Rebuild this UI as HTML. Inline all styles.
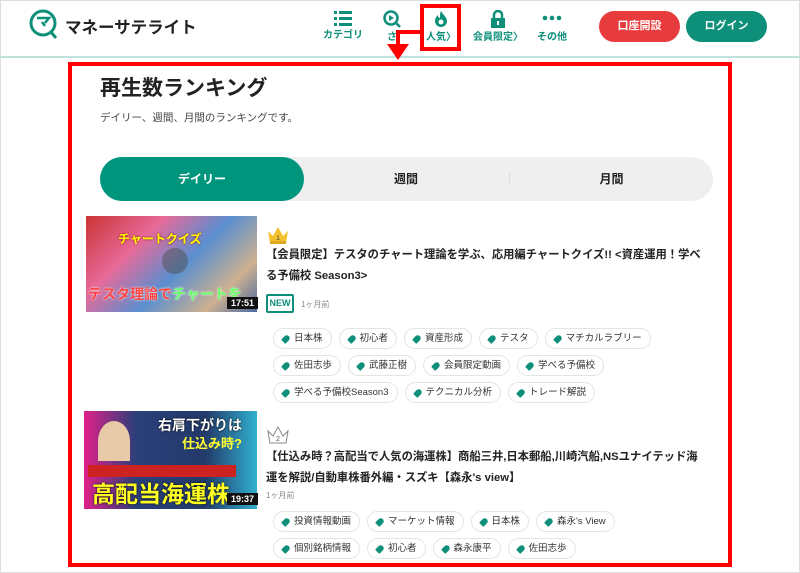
<!DOCTYPE html>
<html><head><meta charset="utf-8"><style>
*{margin:0;padding:0;box-sizing:border-box}
body{width:800px;height:573px;overflow:hidden;background:#fff;font-family:"Liberation Sans","Noto Sans CJK JP",sans-serif;color:#222;position:relative}
.abs{position:absolute}
.nav{position:absolute;top:10px;width:60px;text-align:center;color:#0d8f7a;font-size:10px;font-weight:bold;line-height:12px}
.nav svg{display:block;margin:0 auto 4px}
.btn{position:absolute;top:11px;height:31px;width:81px;border-radius:16px;color:#fff;font-size:11px;font-weight:bold;text-align:center;line-height:31px}
.tags{position:absolute;left:273px;width:450px;display:flex;flex-wrap:wrap;column-gap:7px}
.br{flex-basis:100%;height:0}
.tag{height:21px;margin-bottom:6px;border:1px solid #e4e4e4;border-radius:11px;padding:0 8px 0 8px;font-size:9.5px;line-height:19px;color:#333;display:flex;align-items:center;white-space:nowrap}
.tag i{display:inline-block;width:8px;height:6px;background:#0d8f7a;border-radius:1px 3px 3px 1px;transform:rotate(-45deg);margin-right:4px}
.title{position:absolute;left:266px;width:460px;font-size:11.3px;font-weight:bold;line-height:21px;color:#222;white-space:nowrap}
.time{position:absolute;background:#111;color:#fff;font-size:9px;font-weight:bold;padding:1px 4px}
</style></head><body>
<div class="abs" style="left:0;top:0;width:800px;height:573px;border:1px solid #ddd"></div>
<svg class="abs" style="left:29px;top:9px" width="30" height="34" viewBox="0 0 30 34"><circle cx="14" cy="14" r="12" fill="none" stroke="#0d8f7a" stroke-width="3"/><path d="M8 9h12l-4 5M13 13l3 4" fill="none" stroke="#0d8f7a" stroke-width="2.5"/><path d="M22 23l5 6" stroke="#0d8f7a" stroke-width="3"/></svg>
<div class="abs" style="left:65px;top:14px;font-size:16.5px;font-weight:bold;color:#222">マネーサテライト</div>
<div class="nav" style="left:313px"><svg width="18" height="16"><rect x="0" y="1" width="3" height="3" fill="#0d8f7a"/><rect x="5" y="1" width="13" height="3" fill="#0d8f7a"/><rect x="0" y="7" width="3" height="3" fill="#0d8f7a"/><rect x="5" y="7" width="13" height="3" fill="#0d8f7a"/><rect x="0" y="13" width="3" height="3" fill="#0d8f7a"/><rect x="5" y="13" width="13" height="3" fill="#0d8f7a"/></svg>カテゴリ</div>
<div class="nav" style="left:362px"><svg width="18" height="18"><circle cx="8" cy="8" r="6.5" fill="none" stroke="#0d8f7a" stroke-width="2.5"/><path d="M6 5l5 3-5 3z" fill="#0d8f7a"/><path d="M13 13l4 4" stroke="#0d8f7a" stroke-width="2.5"/></svg>さ</div>
<div class="nav" style="left:411px"><svg width="16" height="18"><path d="M8 1C10 5 14 7 14 11a6 6 0 0 1-12 0C2 8 4 6 5 5c0 2 1 3 2 3C7 5 7 3 8 1z" fill="#0d8f7a"/><circle cx="8" cy="12" r="2.5" fill="#fff"/></svg>人気〉</div>
<div class="nav" style="left:468px"><svg width="16" height="18"><path d="M4 8V5a4 4 0 0 1 8 0v3" fill="none" stroke="#0d8f7a" stroke-width="2.5"/><rect x="1" y="8" width="14" height="10" fill="#0d8f7a"/><rect x="7" y="11" width="2" height="4" fill="#fff"/></svg>会員限定〉</div>
<div class="nav" style="left:522px"><svg width="20" height="18"><circle cx="3" cy="8" r="2.3" fill="#0d8f7a"/><circle cx="10" cy="8" r="2.3" fill="#0d8f7a"/><circle cx="17" cy="8" r="2.3" fill="#0d8f7a"/></svg>その他</div>
<div class="btn" style="left:599px;background:#e83b3d">口座開設</div>
<div class="btn" style="left:686px;background:#0d8f7a">ログイン</div>
<div class="abs" style="left:0;top:56px;width:800px;height:2px;background:#bfe3dc"></div>
<div class="abs" style="left:420px;top:4px;width:41px;height:47px;border:4px solid #f00"></div>
<div class="abs" style="left:396px;top:30px;width:26px;height:4px;background:#f00"></div>
<div class="abs" style="left:396px;top:30px;width:4px;height:18px;background:#f00"></div>
<svg class="abs" style="left:387px;top:44px" width="22" height="16"><path d="M0 0h22L11 16z" fill="#f00"/></svg>
<div class="abs" style="left:68px;top:62px;width:664px;height:505px;border:4px solid #f00"></div>
<div class="abs" style="left:100px;top:72px;font-size:21px;font-weight:bold;color:#222">再生数ランキング</div>
<div class="abs" style="left:100px;top:110px;font-size:10.5px;color:#444">デイリー、週間、月間のランキングです。</div>
<div class="abs" style="left:100px;top:157px;width:613px;height:44px;border-radius:22px;background:#efefef"></div>
<div class="abs" style="left:100px;top:157px;width:204px;height:44px;border-radius:22px;background:#00967d;color:#fff;font-size:12px;font-weight:bold;text-align:center;line-height:44px">デイリー</div>
<div class="abs" style="left:304px;top:157px;width:204px;height:44px;font-size:12px;font-weight:bold;text-align:center;line-height:44px">週間</div>
<div class="abs" style="left:509px;top:172px;width:1px;height:14px;background:#ddd"></div>
<div class="abs" style="left:510px;top:157px;width:203px;height:44px;font-size:12px;font-weight:bold;text-align:center;line-height:44px">月間</div>
<div class="abs" style="left:86px;top:216px;width:171px;height:96px;background:linear-gradient(135deg,#c33 0%,#e66a9a 30%,#5a8fd0 55%,#cdb090 80%,#4b6aa0 100%);overflow:hidden">
<div class="abs" style="left:32px;top:14px;font-size:12px;font-weight:bold;color:#ff0;text-shadow:0 0 2px #900">チャートクイズ</div>
<div class="abs" style="left:76px;top:32px;width:26px;height:26px;border-radius:50%;background:rgba(80,80,80,.5)"></div>
<div class="abs" style="left:2px;top:68px;font-size:14px;font-weight:bold;color:#f44;text-shadow:0 0 2px #fff">テスタ理論で<span style="color:#6f6">チャートを</span></div>
</div>
<div class="time" style="left:227px;top:297px">17:51</div>
<svg class="abs" style="left:266px;top:225px" width="24" height="20"><path d="M2 6l5 5 5-9 5 9 5-5-2 12H4z" fill="#f2c12e"/><rect x="4" y="16" width="16" height="3" fill="#e0a820"/><text x="12" y="15" font-size="6" text-anchor="middle" fill="#333">1</text></svg>
<div class="title" style="top:245px">【会員限定】テスタのチャート理論を学ぶ、応用編チャートクイズ!! &lt;資産運用！学べ<br>る予備校 Season3&gt;</div>
<div class="abs" style="left:266px;top:294px;width:28px;height:19px;border:2px solid #0d8f7a;border-radius:2px;color:#0d8f7a;font-size:9px;font-weight:bold;text-align:center;line-height:15px">NEW</div>
<div class="abs" style="left:301px;top:299px;font-size:8px;color:#888">1ヶ月前</div>
<div class="tags" style="top:328px">
<div class="tag"><i></i>日本株</div><div class="tag"><i></i>初心者</div><div class="tag"><i></i>資産形成</div><div class="tag"><i></i>テスタ</div><div class="tag"><i></i>マチカルラブリー</div><div class="br"></div>
<div class="tag"><i></i>佐田志歩</div><div class="tag"><i></i>武藤正樹</div><div class="tag"><i></i>会員限定動画</div><div class="tag"><i></i>学べる予備校</div><div class="br"></div>
<div class="tag"><i></i>学べる予備校Season3</div><div class="tag"><i></i>テクニカル分析</div><div class="tag"><i></i>トレード解説</div>
</div>
<div class="abs" style="left:84px;top:411px;width:173px;height:98px;background:linear-gradient(90deg,#e0208a,#2b3f7a 30%,#233a6a 70%,#30b0d0);overflow:hidden">
<div class="abs" style="left:74px;top:4px;font-size:14px;font-weight:bold;color:#fff;text-shadow:0 0 2px #000">右肩下がりは</div>
<div class="abs" style="left:98px;top:22px;font-size:13px;font-weight:bold;color:#ff3">仕込み時?</div>
<div class="abs" style="left:14px;top:10px;width:32px;height:40px;border-radius:50% 50% 0 0;background:#e8c9a8"></div>
<div class="abs" style="left:4px;top:54px;width:148px;height:12px;background:#c22"></div>
<div class="abs" style="left:8px;top:64px;font-size:23px;font-weight:bold;color:#ff2;text-shadow:0 0 2px #000">高配当海運株</div>
</div>
<div class="time" style="left:227px;top:493px">19:37</div>
<svg class="abs" style="left:266px;top:425px" width="24" height="20"><path d="M2 6l5 5 5-9 5 9 5-5-2 12H4z" fill="none" stroke="#888"/><text x="12" y="16" font-size="7" text-anchor="middle" fill="#555">2</text></svg>
<div class="title" style="top:447px">【仕込み時？高配当で人気の海運株】商船三井,日本郵船,川崎汽船,NSユナイテッド海<br>運を解説/自動車株番外編・スズキ【森永's view】</div>
<div class="abs" style="left:266px;top:490px;font-size:8px;color:#888">1ヶ月前</div>
<div class="tags" style="top:511px">
<div class="tag"><i></i>投資情報動画</div><div class="tag"><i></i>マーケット情報</div><div class="tag"><i></i>日本株</div><div class="tag"><i></i>森永's View</div><div class="br"></div>
<div class="tag"><i></i>個別銘柄情報</div><div class="tag"><i></i>初心者</div><div class="tag"><i></i>森永康平</div><div class="tag"><i></i>佐田志歩</div>
</div>
</body></html>
